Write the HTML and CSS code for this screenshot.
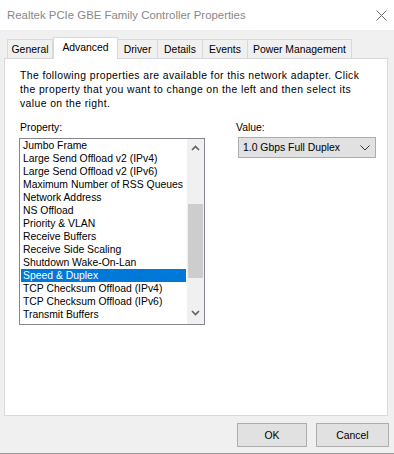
FILE: index.html
```html
<!DOCTYPE html>
<html>
<head>
<meta charset="utf-8">
<link rel="stylesheet" href="styles.css">
</head>
<body>
<div class="window">
  <div class="titlebar">
    <span class="title">Realtek PCIe GBE Family Controller Properties</span>
    <svg class="close" width="11" height="11" viewBox="0 0 11 11"><path d="M0.5 0.5 L10.5 10.5 M10.5 0.5 L0.5 10.5" stroke="#6a6a6a" stroke-width="1" fill="none"/></svg>
  </div>
  <div class="tabs">
    <div class="tab tab-general">General</div>
    <div class="tab tab-advanced active">Advanced</div>
    <div class="tab tab-driver">Driver</div>
    <div class="tab tab-details">Details</div>
    <div class="tab tab-events">Events</div>
    <div class="tab tab-power">Power Management</div>
  </div>
  <div class="panel">
    <p class="desc">The following properties are available for this network adapter. Click<br>the property that you want to change on the left and then select its<br>value on the right.</p>
    <div class="fields">
      <div class="col-left">
        <div class="label">Property:</div>
        <div class="listbox">
          <ul class="items">
            <li>Jumbo Frame</li>
            <li>Large Send Offload v2 (IPv4)</li>
            <li>Large Send Offload v2 (IPv6)</li>
            <li>Maximum Number of RSS Queues</li>
            <li>Network Address</li>
            <li>NS Offload</li>
            <li>Priority &amp; VLAN</li>
            <li>Receive Buffers</li>
            <li>Receive Side Scaling</li>
            <li>Shutdown Wake-On-Lan</li>
            <li class="selected">Speed &amp; Duplex</li>
            <li>TCP Checksum Offload (IPv4)</li>
            <li>TCP Checksum Offload (IPv6)</li>
            <li>Transmit Buffers</li>
          </ul>
          <div class="scrollbar">
            <div class="arrow"><svg width="9" height="6" viewBox="0 0 9 6"><path d="M1 5 L4.5 1.5 L8 5" stroke="#606060" stroke-width="1.6" fill="none"/></svg></div>
            <div class="track"><div class="thumb"></div></div>
            <div class="arrow arrow-down"><svg width="9" height="6" viewBox="0 0 9 6"><path d="M1 1 L4.5 4.5 L8 1" stroke="#606060" stroke-width="1.6" fill="none"/></svg></div>
          </div>
        </div>
      </div>
      <div class="col-right">
        <div class="label">Value:</div>
        <div class="select">
          <span>1.0 Gbps Full Duplex</span>
          <svg width="10" height="6" viewBox="0 0 10 6"><path d="M0.5 0.5 L5 5 L9.5 0.5" stroke="#333" stroke-width="1" fill="none"/></svg>
        </div>
      </div>
    </div>
  </div>
  <div class="footer">
    <button class="btn btn-ok">OK</button>
    <button class="btn btn-cancel">Cancel</button>
  </div>
</div>
</body>
</html>
```

FILE: styles.css
```css
html, body {
  margin: 0;
  padding: 0;
}
body {
  font-family: "Liberation Sans", Arial, sans-serif;
  font-size: 10.4px;
  color: #000;
  background: #f0f0f0;
}
.window {
  width: 394px;
  height: 454px;
  box-sizing: border-box;
  background: #f0f0f0;
  border-bottom: 1px solid #9a9a9a;
  display: flex;
  flex-direction: column;
}
.titlebar {
  height: 30px;
  flex: none;
  background: #fff;
  display: flex;
  align-items: center;
  padding: 0 7px 0 7px;
}
.title {
  font-size: 11.4px;
  color: #888;
}
.close {
  margin-left: auto;
}
.tabs {
  height: 28px;
  flex: none;
  display: flex;
  align-items: flex-end;
  padding-left: 7px;
}
.tab {
  height: 19px;
  box-sizing: border-box;
  border: 1px solid #d9d9d9;
  border-bottom: none;
  padding: 0;
  text-align: center;
  line-height: 19px;
  margin-left: -1px;
  background: #f0f0f0;
  white-space: nowrap;
}
.tab:first-child {
  margin-left: 0;
}
.tab.active {
  height: 22px;
  margin-left: 0;
  margin-bottom: -1px;
  background: #fff;
  position: relative;
  z-index: 1;
  line-height: 19px;
}
.tab-general { width: 46px; }
.tab-advanced { width: 65px; }
.tab-driver { width: 41px; }
.tab-details { width: 46px; }
.tab-events { width: 46px; }
.tab-power { width: 105px; }
.panel {
  margin-left: 4px;
  width: 384px;
  height: 358px;
  flex: none;
  box-sizing: border-box;
  border: 1px solid #d9d9d9;
  background: #fff;
  padding: 10px 15px 0 15px;
}
.desc {
  margin: 0;
  line-height: 14px;
  letter-spacing: 0.4px;
  white-space: nowrap;
}
.fields {
  display: flex;
  margin-top: 10px;
}
.label {
  line-height: 13px;
}
.col-left {
  width: 186px;
  margin-left: -1px;
}
.col-left .label {
  padding-left: 1px;
}
.col-right {
  margin-left: 31px;
}
.listbox {
  margin-top: 4px;
  width: 186px;
  height: 187px;
  box-sizing: border-box;
  border: 1px solid #828790;
  display: flex;
}
.items {
  list-style: none;
  margin: 0;
  padding: 0;
  width: 167px;
}
.items li {
  height: 13px;
  line-height: 13px;
  margin: 0 1px;
  padding-left: 2px;
  white-space: nowrap;
}
.items li.selected {
  background: #0078d7;
  color: #fff;
}
.scrollbar {
  width: 17px;
  background: #f0f0f0;
  display: flex;
  flex-direction: column;
}
.arrow {
  height: 17px;
  display: flex;
  align-items: center;
  justify-content: center;
}
.arrow-down {
  align-items: flex-start;
  padding-top: 3px;
  box-sizing: border-box;
}
.track {
  flex: 1;
}
.thumb {
  margin: 48px 1px 0 1px;
  height: 74px;
  background: #cdcdcd;
}
.select {
  margin-top: 3px;
  margin-left: 2px;
  width: 138px;
  height: 21px;
  box-sizing: border-box;
  border: 1px solid #adadad;
  background: #e1e1e1;
  display: flex;
  align-items: center;
  padding: 0 5px 0 4px;
}
.select svg {
  margin-left: auto;
}
.footer {
  flex: 1;
  display: flex;
  justify-content: flex-end;
  align-items: flex-start;
  padding: 7px 5px 0 0;
}
.btn {
  height: 24px;
  box-sizing: border-box;
  border: 1px solid #adadad;
  background: #e1e1e1;
  font-family: "Liberation Sans", Arial, sans-serif;
  font-size: 10.4px;
  color: #000;
  padding: 0;
  margin: 0;
}
.btn-ok {
  width: 70px;
}
.btn-cancel {
  width: 73px;
  margin-left: 9px;
}
```
